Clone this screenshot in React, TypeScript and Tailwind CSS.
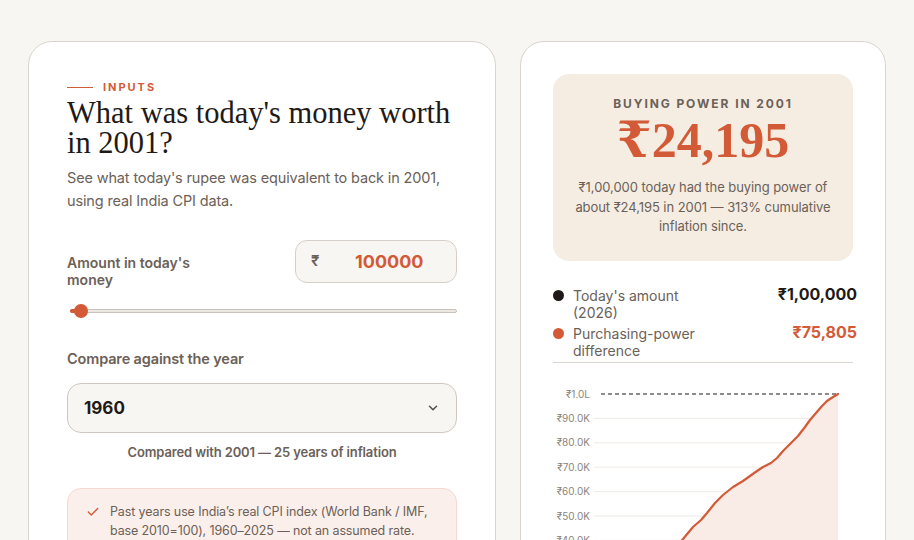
import { Check, ChevronDown } from 'lucide-react';

const sans = { fontFamily: 'Inter, "Noto Sans", sans-serif' };
const serif = { fontFamily: '"Liberation Serif", "DejaVu Serif", serif' };

const ticks = ['₹1.0L', '₹90.0K', '₹80.0K', '₹70.0K', '₹60.0K', '₹50.0K', '₹40.0K', '₹30.0K', '₹20.0K', '₹10.0K', '₹0'];

// value of ₹1L through the years, in chart coords
const linePoints: [number, number][] = [
  [44, 214], [60, 206], [80, 196], [100, 184], [115, 171], [130, 155], [140, 143],
  [148, 136], [154, 129], [162, 119], [170, 111], [180, 103], [190, 97], [197, 92],
  [204, 87], [210, 83], [218, 79], [224, 74], [230, 67], [236, 61], [245, 52],
  [252, 43], [257, 36], [263, 29], [269, 22], [274, 17], [280, 13], [285, 10],
];

function InflationChart() {
  const step = 24.4;
  const zeroY = 10 + step * 10;
  const line = linePoints.map(([x, y], i) => `${i ? 'L' : 'M'}${x} ${y}`).join(' ');
  const area = `${line} L285 ${zeroY} L44 ${zeroY} Z`;

  return (
    <svg width="300" height="280" viewBox="0 0 300 280" className="block">
      {ticks.map((t, i) => {
        const y = 10 + i * step;
        return (
          <g key={t}>
            {i > 0 && <line x1="41" x2="285" y1={y} y2={y} stroke="#efebe6" strokeWidth="1" />}
            <text x="37" y={y + 3.5} textAnchor="end" fontSize="10" fill="#8d847b" style={sans}>
              {t}
            </text>
          </g>
        );
      })}
      <path d={area} fill="#f9ebe6" />
      <line x1="48" x2="285" y1="10" y2="10" stroke="#1f1a17" strokeWidth="1.2" strokeDasharray="4 3" />
      <path d={line} fill="none" stroke="#d35a37" strokeWidth="2.2" strokeLinejoin="round" strokeLinecap="round" />
    </svg>
  );
}

export default function App() {
  return (
    <div className="min-h-screen bg-[#f8f6f2] px-7 pt-[41px]" style={sans}>
      <div className="flex gap-6">
        {/* Inputs card */}
        <div className="w-[468px] shrink-0 rounded-3xl border border-[#d9d4cd] bg-white p-[38px]">
          <div className="flex h-[14px] items-center gap-[10px]">
            <span className="h-px w-[26px] bg-[#d35a37]" />
            <span className="text-[11px] font-bold tracking-[0.18em] text-[#d35a37]">INPUTS</span>
          </div>
          <h1 className="mt-1 text-[30.5px] leading-[30px] text-[#1f1a17]" style={serif}>
            What was today's money worth in 2001?
          </h1>
          <p className="mt-2 text-[14.5px] leading-[23px] tracking-[-0.01em] text-[#6b6158]">
            See what today's rupee was equivalent to back in 2001, using real India CPI data.
          </p>

          <div className="mt-7 flex items-start justify-between">
            <label className="mt-[14px] w-[150px] text-[14px] font-semibold leading-[17px] text-[#6b6158]">
              Amount in today's money
            </label>
            <div className="flex h-[43px] w-[162px] items-center rounded-xl border border-[#d6d0c8] bg-[#f8f6f2] pl-[15px]">
              <span className="text-[15px] font-semibold text-[#6b6158]">₹</span>
              <span className="flex-1 pl-[3px] text-center text-[18px] font-bold text-[#d35a37]">100000</span>
            </div>
          </div>

          <div className="relative ml-[3px] mt-4 flex h-[14px] items-center">
            <div className="h-[4px] w-full rounded-full border border-[#c9c3bb] bg-[#ebe7e1]" />
            <div className="absolute left-0 h-[4px] w-[10px] rounded-l-full bg-[#d35a37]" />
            <div className="absolute left-[4px] h-[14px] w-[14px] rounded-full bg-[#d35a37]" />
          </div>

          <div className="mt-[31px] text-[14.5px] font-semibold leading-5 tracking-[-0.01em] text-[#6b6158]">
            Compare against the year
          </div>
          <div className="mt-[14px] flex h-[50px] items-center justify-between rounded-[14px] border border-[#cfc8bf] bg-[#f8f6f2] pl-4 pr-[16px]">
            <span className="text-[17px] font-bold leading-5 text-[#1f1a17]">1960</span>
            <ChevronDown className="h-[14px] w-[14px] text-[#5a5149]" strokeWidth={2.6} />
          </div>
          <p className="mt-[10px] text-center text-[13px] font-semibold leading-[18px] tracking-[-0.01em] text-[#6b6158]">
            Compared with 2001 — 25 years of inflation
          </p>

          <div className="mt-[27px] flex gap-[10px] rounded-[14px] border border-[#f5d9d0] bg-[#fbefeb] pb-4 pl-[18px] pr-5 pt-[13px]">
            <Check className="mt-[3px] h-[14px] w-[14px] shrink-0 text-[#d35a37]" strokeWidth={2.4} />
            <p className="text-[12.5px] leading-[19px] tracking-[-0.01em] text-[#6b6158]">
              Past years use India’s real CPI index (World Bank / IMF, base 2010=100), 1960–2025 — not an assumed rate.
            </p>
          </div>
        </div>

        {/* Results card */}
        <div className="w-[366px] shrink-0 rounded-3xl border border-[#d9d4cd] bg-white p-8">
          <div className="rounded-2xl bg-[#f5ede2] px-5 pb-6 pt-[22px] text-center">
            <div className="text-[12px] font-bold leading-4 tracking-[0.16em] text-[#6b6158]">
              BUYING POWER IN 2001
            </div>
            <div className="mt-1 text-[50px] font-bold leading-[48px] text-[#d35a37]" style={serif}>
              ₹24,195
            </div>
            <p className="mt-[14px] text-[13px] leading-[19.5px] tracking-[-0.005em] text-[#6b6158]">
              ₹1,00,000 today had the buying power of about ₹24,195 in 2001 — 313% cumulative inflation since.
            </p>
          </div>

          <div className="mt-[26px] flex flex-col gap-1 border-b border-[#d9d4ce] pb-[3px]">
            <div className="flex items-start justify-between">
              <div className="flex items-start gap-[9px]">
                <span className="mt-[3px] h-[11px] w-[11px] rounded-full bg-[#1f1a17]" />
                <span className="w-[130px] text-[14px] leading-[17px] text-[#6b6158]">Today's amount (2026)</span>
              </div>
              <span className="-mr-1 -mt-[1px] text-[16px] font-bold leading-[17px] text-[#1f1a17]">₹1,00,000</span>
            </div>
            <div className="flex items-start justify-between">
              <div className="flex items-start gap-[9px]">
                <span className="mt-[3px] h-[11px] w-[11px] rounded-full bg-[#d35a37]" />
                <span className="w-[130px] text-[14px] leading-[17px] text-[#6b6158]">Purchasing-power difference</span>
              </div>
              <span className="-mr-1 -mt-[1px] text-[16px] font-bold leading-[17px] text-[#d35a37]">₹75,805</span>
            </div>
          </div>

          <div className="mt-[21px]">
            <InflationChart />
          </div>
        </div>
      </div>
    </div>
  );
}
